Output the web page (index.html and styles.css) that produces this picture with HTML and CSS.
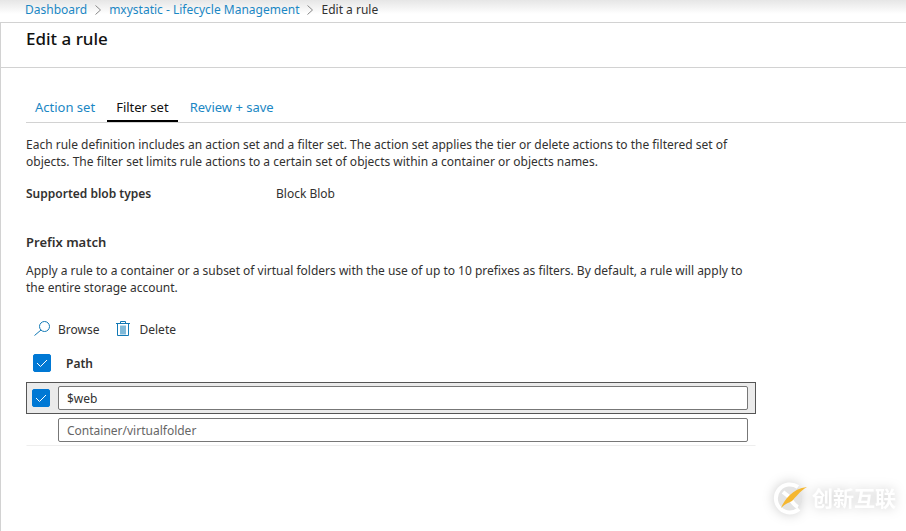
FILE: index.html
```html
<!DOCTYPE html>
<html lang="en">
<head>
    <meta charset="UTF-8">
    <meta name="viewport" content="width=device-width, initial-scale=1.0">
    <title>Edit a rule</title>
    <link rel="stylesheet" href="styles.css">
</head>
<body>
    <nav class="breadcrumb" aria-label="Breadcrumb">
        <a href="#">Dashboard</a>
        <svg class="chevron" viewBox="0 0 6 10"><path d="M0.5 0.5L5.5 5L0.5 9.5"/></svg>
        <a href="#">mxystatic - Lifecycle Management</a>
        <svg class="chevron" viewBox="0 0 6 10"><path d="M0.5 0.5L5.5 5L0.5 9.5"/></svg>
        <span>Edit a rule</span>
    </nav>

    <div class="blade">
        <header class="blade-header">
            <h1>Edit a rule</h1>
        </header>

        <main>
            <nav class="tabs">
                <a href="#" class="tab">Action set</a>
                <a href="#" class="tab active">Filter set</a>
                <a href="#" class="tab">Review + save</a>
            </nav>

            <div class="content">
                <p>Each rule definition includes an action set and a filter set. The action set applies the tier or delete actions to the filtered set of objects. The filter set limits rule actions to a certain set of objects within a container or objects names.</p>

                <dl class="blob-types">
                    <dt>Supported blob types</dt>
                    <dd>Block Blob</dd>
                </dl>

                <h2>Prefix match</h2>
                <p>Apply a rule to a container or a subset of virtual folders with the use of up to 10 prefixes as filters. By default, a rule will apply to the entire storage account.</p>

                <div class="toolbar">
                    <button type="button">
                        <svg class="icon" viewBox="0 0 16 16">
                            <circle class="stroke" cx="10.5" cy="5.5" r="5"/>
                            <path class="stroke" d="M7 9L0.5 14.5"/>
                        </svg>
                        Browse
                    </button>
                    <button type="button">
                        <svg class="icon" viewBox="0 0 16 16">
                            <path class="fill" d="M5 4.5h6v9H5z"/>
                            <path class="stroke" d="M1 2.5h14M5.5 2.5v-2h5v2M2.5 2.5v12h11v-12"/>
                        </svg>
                        Delete
                    </button>
                </div>

                <table class="paths">
                    <thead>
                        <tr>
                            <th class="check"><input type="checkbox" aria-label="Select all paths" checked></th>
                            <th scope="col">Path</th>
                        </tr>
                    </thead>
                    <tbody>
                        <tr class="selected">
                            <td class="check"><input type="checkbox" aria-label="Select $web" checked></td>
                            <td><input type="text" aria-label="Path" value="$web"></td>
                        </tr>
                        <tr>
                            <td class="check"></td>
                            <td><input type="text" aria-label="New path" placeholder="Container/virtualfolder"></td>
                        </tr>
                    </tbody>
                </table>
            </div>
        </main>
    </div>

    <div class="watermark" lang="zh">
        <svg class="watermark-logo" viewBox="0 0 36 34">
            <circle class="disc" cx="17" cy="17" r="13"/>
            <path class="ring" d="M26 5A14 14 0 1 0 27 27"/>
            <path class="ring" d="M11 10L16 14C19 17 21 23 26 25"/>
            <path class="swoosh" d="M9 26C13 17 20 7 35 5C27 10 24 15 20 19C16 21 13 22 9 26z"/>
        </svg>
        <span>创新互联</span>
    </div>
</body>
</html>
```
FILE: styles.css
```css
:root {
    --link-color: #1b87c4;
    --primary-color: #0078d4;
    --text-color: #323130;
    --border-color: #d2d2d2;
}

* {
    box-sizing: border-box;
}

body {
    display: flex;
    flex-direction: column;
    min-height: 100vh;
    margin: 0;
    font-family: 'Segoe UI', 'Noto Sans', 'Open Sans', sans-serif;
    font-size: 12px;
    line-height: 17px;
    color: var(--text-color);
    background-color: white;
}

a {
    color: var(--link-color);
    text-decoration: none;
}

h1, h2, p, dl, dd {
    margin: 0;
}

.breadcrumb {
    display: flex;
    align-items: center;
    gap: 8px;
    height: 22px;
    padding: 0 25px 3px;
    background: linear-gradient(#e6e6e6, white 14px);
}

.chevron {
    width: 6px;
    height: 10px;
    fill: none;
    stroke: #888;
}

.blade {
    flex: 1;
    border-top: 1px solid var(--border-color);
    border-left: 1px solid var(--border-color);
}

.blade-header {
    height: 45px;
    padding: 4px 25px;
    border-bottom: 1px solid var(--border-color);
}

h1 {
    font-size: 17px;
    font-weight: 500;
    line-height: 24px;
    color: #111;
}

main {
    padding: 24px 0 0 25px;
}

.tabs {
    display: flex;
    gap: 3px;
    font-size: 13px;
    border-bottom: 1px solid var(--border-color);
}

.tab {
    padding: 7px 9px 4px;
    border-bottom: 2px solid transparent;
}

.tab.active {
    color: #111;
    border-color: black;
}

.content {
    max-width: 730px;
    padding-top: 13px;
}

.blob-types {
    display: flex;
    margin: 15px 0 32px;
}

.blob-types dt {
    width: 250px;
    font-weight: 600;
}

h2 {
    margin-bottom: 11px;
    font-size: 13px;
    font-weight: 600;
    line-height: 17px;
}

.toolbar {
    display: flex;
    gap: 16px;
    margin: 25px 0 6px;
    padding-left: 8px;
}

.toolbar button {
    display: flex;
    align-items: center;
    gap: 8px;
    padding: 0;
    border: none;
    background: none;
    font: inherit;
    color: inherit;
    cursor: pointer;
}

.icon {
    width: 16px;
    height: 16px;
    margin-bottom: 1px;
}

.icon .stroke {
    fill: none;
    stroke: #1279b5;
}

.icon .fill {
    fill: #7fb9d8;
}

.paths {
    width: 100%;
    border-collapse: separate;
    border-spacing: 0;
}

th, td {
    padding: 3px 7px 3px 0;
    text-align: left;
    border: 1px solid transparent;
    border-width: 1px 0;
}

th {
    height: 38px;
    padding-left: 8px;
    font-weight: 600;
}

td:last-child {
    border-right-width: 1px;
}

.check {
    width: 32px;
    padding: 0 0 0 5px;
    border-left-width: 1px;
}

th.check {
    padding-left: 6px;
}

.selected td {
    background-color: #ebebeb;
    border-color: #555;
}

tbody tr:last-child td {
    border-bottom-color: #eee;
}

input[type="checkbox"] {
    display: block;
    appearance: none;
    width: 18px;
    height: 18px;
    margin: 0;
    border: 1px solid #666;
    border-radius: 2px;
}

input[type="checkbox"]:checked {
    border-color: var(--primary-color);
    background: var(--primary-color) url("data:image/svg+xml,%3Csvg xmlns='http://www.w3.org/2000/svg' viewBox='0 0 16 16'%3E%3Cpath d='M3 8l3.5 3.5L13 5' fill='none' stroke='white'/%3E%3C/svg%3E");
}

input[type="text"] {
    display: block;
    width: 100%;
    height: 24px;
    padding: 0 8px;
    border: 1px solid #777;
    border-radius: 2px;
    font: inherit;
    color: inherit;
}

input::placeholder {
    color: #666;
}

.watermark {
    position: absolute;
    right: 10px;
    bottom: 13px;
    display: flex;
    align-items: center;
    gap: 4px;
    font-family: 'Noto Sans CJK SC', sans-serif;
    font-size: 21px;
    font-weight: 700;
    line-height: 34px;
    color: white;
    filter: drop-shadow(0 0 6px rgba(0, 0, 0, 0.2));
}

.watermark span {
    padding-bottom: 4px;
}

.watermark-logo {
    width: 36px;
    height: 34px;
}

.disc {
    fill: #e4e4e4;
}

.ring {
    fill: none;
    stroke: white;
    stroke-width: 4;
}

.swoosh {
    fill: #f5b731;
}
```
